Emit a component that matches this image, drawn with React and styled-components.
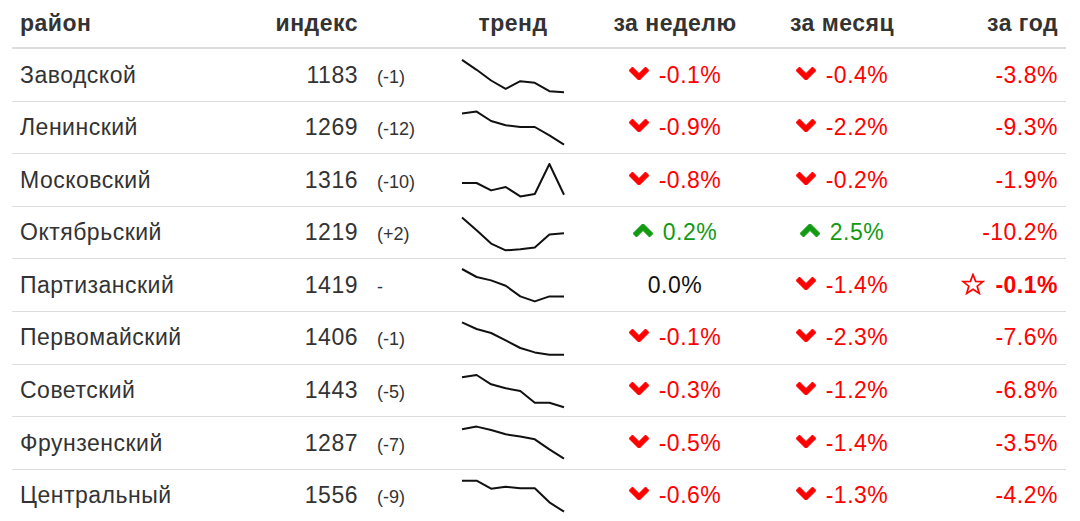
import React from "react";
import styled, { createGlobalStyle } from "styled-components";

const GlobalStyle = createGlobalStyle`
  body {
    margin: 0;
    background: #fff;
    font-family: "Liberation Sans", Arial, Helvetica, sans-serif;
    color: #333;
  }
`;

const COLS = "238px 116px 86px 122px 202px 132px 158px";

const Table = styled.div`
  margin-left: 12px;
  width: 1054px;
`;

const Row = styled.div`
  display: grid;
  grid-template-columns: ${COLS};
  align-items: center;
  height: ${(p) => (p.$head ? "47px" : "51.6px")};
  border-bottom: ${(p) => (p.$head ? "2px" : "1px")} solid #ddd;
  font-size: 23px;
  letter-spacing: 0.5px;
  font-weight: ${(p) => (p.$head ? 700 : 400)};
`;

const Cell = styled.div`
  display: flex;
  justify-content: ${(p) =>
    p.$align === "right" ? "flex-end" : p.$align === "center" ? "center" : "flex-start"};
  padding: 0 8px;
  white-space: nowrap;
`;

const Delta = styled.div`
  font-size: 18px;
  letter-spacing: 0;
  padding: 4px 0 0 11px;
`;

const Change = styled.span`
  display: inline-flex;
  align-items: center;
  gap: 10px;
  color: ${(p) => (p.$dir === "down" ? "#ff0000" : p.$dir === "up" ? "#139a13" : "#111")};
  font-weight: ${(p) => (p.$bold ? 700 : 400)};

  svg {
    margin-top: -4px;
    flex: none;
  }
`;

const Chevron = ({ up, color }) => (
  <svg width="20" height="13" viewBox="0 0 20 13">
    <polygon
      points={up ? "0,9.5 3.5,13 10,6.5 16.5,13 20,9.5 10,-0.5" : "0,3.5 3.5,0 10,6.5 16.5,0 20,3.5 10,13.5"}
      fill={color}
      strokeLinejoin="round"
      stroke={color}
      strokeWidth="1"
    />
  </svg>
);

const Star = () => (
  <svg width="24" height="22" viewBox="0 0 24 22" style={{ marginTop: -2 }}>
    <polygon
      points="12,1.5 14.6,8.4 22,8.6 16.2,13.2 18.3,20.4 12,16.2 5.7,20.4 7.8,13.2 2,8.6 9.4,8.4"
      fill="none"
      stroke="#ff0000"
      strokeWidth="1.7"
      strokeLinejoin="miter"
    />
  </svg>
);

const Spark = ({ data }) => {
  const pts = data.map((y, i) => `${(2 + i * 14.57).toFixed(1)},${y}`).join(" ");
  return (
    <svg width="106" height="52" viewBox="0 0 106 52">
      <polyline points={pts} fill="none" stroke="#111" strokeWidth="2" strokeLinejoin="round" />
    </svg>
  );
};

const rows = [
  { name: "Заводской", index: 1183, delta: "(-1)", week: "-0.1", month: "-0.4", year: "-3.8%",
    spark: [10.8, 20.8, 31.5, 39.8, 32.2, 33.8, 42.2, 43.2] },
  { name: "Ленинский", index: 1269, delta: "(-12)", week: "-0.9", month: "-2.2", year: "-9.3%",
    spark: [11.6, 9.6, 19, 23.3, 25, 25, 33.3, 42.6] },
  { name: "Московский", index: 1316, delta: "(-10)", week: "-0.8", month: "-0.2", year: "-1.9%",
    spark: [29, 29, 36.4, 33, 42.4, 40, 10, 40.7] },
  { name: "Октябрьский", index: 1219, delta: "(+2)", week: "0.2", month: "2.5", year: "-10.2%",
    spark: [10.6, 23.3, 36.6, 43.3, 42.3, 40.6, 27.6, 26.3] },
  { name: "Партизанский", index: 1419, delta: "-", week: "0.0", month: "-1.4", year: "-0.1%", best: true,
    spark: [10, 18, 21.4, 26.7, 37.4, 42.4, 37.4, 37.4] },
  { name: "Первомайский", index: 1406, delta: "(-1)", week: "-0.1", month: "-2.3", year: "-7.6%",
    spark: [10.4, 17, 21, 28.4, 36, 40.4, 42.7, 42.7] },
  { name: "Советский", index: 1443, delta: "(-5)", week: "-0.3", month: "-1.2", year: "-6.8%",
    spark: [12.3, 10, 19.3, 23.3, 26, 37.7, 37.7, 42.3] },
  { name: "Фрунзенский", index: 1287, delta: "(-7)", week: "-0.5", month: "-1.4", year: "-3.5%",
    spark: [12.3, 9.6, 13, 17.3, 19.6, 22.3, 32.3, 41.6] },
  { name: "Центральный", index: 1556, delta: "(-9)", week: "-0.6", month: "-1.3", year: "-4.2%",
    spark: [10.7, 10.7, 18.7, 16.7, 18.3, 18.3, 32.3, 41.7] },
];

const Pct = ({ value }) => {
  const n = parseFloat(value);
  if (n === 0) return <Change>{value}%</Change>;
  const up = n > 0;
  const color = up ? "#139a13" : "#ff0000";
  return (
    <Change $dir={up ? "up" : "down"}>
      <Chevron up={up} color={color} />
      {value}%
    </Change>
  );
};

export default function App() {
  return (
    <>
      <GlobalStyle />
      <Table>
        <Row $head>
          <Cell>район</Cell>
          <Cell $align="right">индекс</Cell>
          <Cell />
          <Cell $align="center">тренд</Cell>
          <Cell $align="center">за неделю</Cell>
          <Cell $align="center">за месяц</Cell>
          <Cell $align="right">за год</Cell>
        </Row>
        {rows.map((r) => (
          <Row key={r.name}>
            <Cell>{r.name}</Cell>
            <Cell $align="right">{r.index}</Cell>
            <Delta>{r.delta}</Delta>
            <Cell $align="center">
              <Spark data={r.spark} />
            </Cell>
            <Cell $align="center">
              <Pct value={r.week} />
            </Cell>
            <Cell $align="center">
              <Pct value={r.month} />
            </Cell>
            <Cell $align="right">
              {r.best ? (
                <Change $dir="down" $bold>
                  <Star />
                  {r.year}
                </Change>
              ) : (
                <Change $dir="down">{r.year}</Change>
              )}
            </Cell>
          </Row>
        ))}
      </Table>
    </>
  );
}
